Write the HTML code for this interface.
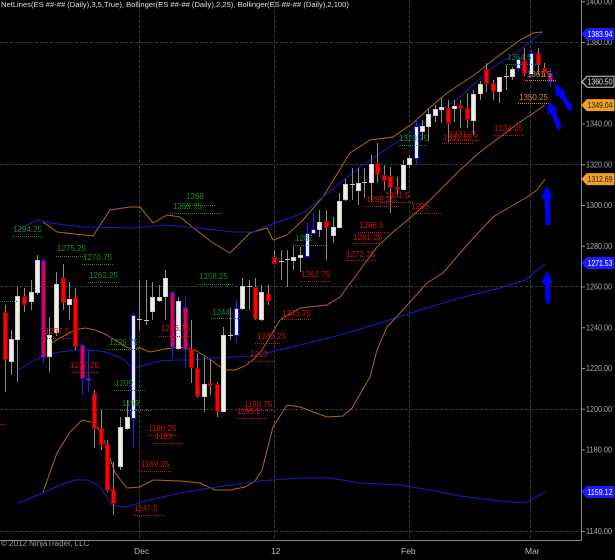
<!DOCTYPE html>
<html><head><meta charset="utf-8">
<style>
html,body{margin:0;padding:0;background:#000;width:615px;height:560px;overflow:hidden}
svg{display:block}
text{font-family:"Liberation Sans",sans-serif}
</style></head>
<body>
<svg id="c" width="615" height="560" xmlns="http://www.w3.org/2000/svg">
<rect width="615" height="560" fill="#000"/>
<g stroke="#3a3a3a" stroke-width="1" stroke-dasharray="3,2">
<line x1="0" y1="42.5" x2="581" y2="42.5"/>
<line x1="0" y1="164.5" x2="581" y2="164.5"/>
<line x1="0" y1="286.5" x2="581" y2="286.5"/>
<line x1="0" y1="409.5" x2="581" y2="409.5"/>
<line x1="0" y1="531.5" x2="581" y2="531.5"/>
<line x1="139.5" y1="0" x2="139.5" y2="540"/>
<line x1="274.5" y1="0" x2="274.5" y2="540"/>
<line x1="409.5" y1="0" x2="409.5" y2="540"/>
<line x1="530.5" y1="0" x2="530.5" y2="540"/>
</g>
<g fill="none" stroke-width="1">
<polyline stroke="#a86a10" points="43,222 57,232 93,236 110,210 130,207 140,207 153,223 167,215 180,217 200,233 213,243 230,253 250,233 267,228 273,240 287,235 303,220 323,197 350,153 370,140 393,137 413,123 427,110 447,93 477,73 493,60 520,40 533,33 543,32"/>
<polyline stroke="#1a1ad0" points="18,230 37,220 50,223 83,227 133,228 167,225 200,228 233,232 253,232 262,228 303,213 360,167 400,140 427,120 460,97 493,67 520,50 543,32"/>
<polyline stroke="#a86a10" points="48,345 60,338 75,330 85,328 95,330 105,334 115,340 128,348 140,348 150,352 165,349 180,347 195,350 205,356 215,363 225,370 235,370 245,366 255,358 262,350 280,320 300,308 327,305 340,297 360,270 377,247 393,232 410,218 427,203 460,170 480,152 500,137 520,122 535,112 545,105"/>
<polyline stroke="#1a1ad0" points="18,370 30,363 45,355 60,352 75,350 90,350 105,352 120,357 133,368 145,365 160,361 175,360 190,360 215,358 250,356 262,354 300,345 340,335 380,323 420,310 460,298 500,288 525,280 545,264"/>
<polyline stroke="#a86a10" points="43,492 57,453 70,432 82,420 95,423 103,437 115,473 127,488 140,487 153,480 180,481 200,483 215,490 230,490 245,487 255,481 262,470 273,427 287,405 300,407 327,417 343,416 352,408 370,377 377,350 387,327 400,313 427,283 443,273 467,245 493,217 510,207 527,197 537,190 545,179"/>
<polyline stroke="#1a1ad0" points="18,503 33,497 43,493 58,486 75,480 88,480 100,487 112,505 125,507 150,500 180,493 210,488 230,485 260,481 300,478 330,478 360,483 400,485 430,490 460,496 500,501 525,503 545,492"/>
</g>
<g id="cd"></g>
<g id="lb" font-size="8"></g>
<g fill="#0000ff" stroke="#0000ff">
<line x1="570" y1="108" x2="560" y2="92" stroke-width="5" stroke-linecap="round"/>
<polygon points="555,84 566,92 556,97" stroke="none"/>
<line x1="559" y1="127" x2="552" y2="110" stroke-width="5" stroke-linecap="round"/>
<polygon points="549,102 558,110 547,114" stroke="none"/>
<line x1="548" y1="223" x2="547" y2="195" stroke-width="5" stroke-linecap="round"/>
<polygon points="547,186 553,198 541,198" stroke="none"/>
<line x1="548" y1="301" x2="547" y2="280" stroke-width="5" stroke-linecap="round"/>
<polygon points="547,271 553,283 541,283" stroke="none"/>
</g>
<line x1="581.5" y1="0" x2="581.5" y2="540" stroke="#888"/>
<line x1="0" y1="540.5" x2="582" y2="540.5" stroke="#888"/>
<g id="ax" font-size="8" fill="#aaa"></g>
<g font-size="8.5" fill="#bbb">
<text x="134" y="554">Dec</text>
<text x="271" y="554">12</text>
<text x="401" y="554">Feb</text>
<text x="525" y="554">Mar</text>
</g>
<text x="1" y="546" font-size="8" fill="#999">© 2012 NinjaTrader, LLC</text>
<text x="1" y="7" font-size="7.6" fill="#ddd">NetLines(ES ##-## (Daily),3,5,True), Bollinger(ES ##-## (Daily),2,25), Bollinger(ES ##-## (Daily),2,100)</text>
<g id="tags" font-size="8"></g>
</svg>
<script>
var NS="http://www.w3.org/2000/svg";
function el(p,n,a,t){var e=document.createElementNS(NS,n);for(var k in a)e.setAttribute(k,a[k]);if(t!=null)e.textContent=t;p.appendChild(e);return e;}
var C=[[5,312,359,305,392,'r'],[11,339,361,330,375,'w'],[17,296,339,287,382,'w'],[24,296,304,288,312,'r'],[31,292,301,280,310,'w'],[37,260,292,255,295,'w'],[43,260,357,258,363,'R'],[49,335,356,317,372,'w'],[56,284,332,272,336,'w'],[63,278,302,264,310,'r'],[69,299,304,282,320,'w'],[75,297,346,288,350,'r'],[82,345,378,343,395,'R'],[88,378,380,350,392,'B'],[94,393,428,390,448,'r'],[101,428,444,410,450,'r'],[107,444,490,440,492,'r'],[113,489,503,462,515,'r'],[120,427,466,417,470,'w'],[127,417,428,400,430,'w'],[133,315,418,313,447,'W'],[139,319,319,280,330,'d'],[146,320,320,280,325,'d'],[152,297,311,282,320,'w'],[159,297,300,285,302,'w'],[165,278,296,270,320,'w'],[172,292,347,290,358,'R'],[178,301,348,297,350,'w'],[185,307,349,297,368,'R'],[191,349,367,320,383,'r'],[197,368,396,353,398,'r'],[204,384,396,357,412,'w'],[210,383,385,360,395,'r'],[217,384,411,382,417,'r'],[223,335,411,327,412,'w'],[230,335,335,308,340,'d'],[236,308,335,300,343,'W'],[242,286,308,278,310,'w'],[249,286,286,280,310,'d'],[255,287,318,278,320,'r'],[261,292,319,285,321,'w'],[268,293,301,285,305,'r'],[274,257,263,250,263,'r'],[281,261,261,250,280,'d'],[287,259,259,250,287,'d'],[293,257,260,247,270,'w'],[300,255,257,247,272,'w'],[307,233,256,222,258,'W'],[313,229,233,213,235,'W'],[319,222,229,210,237,'w'],[326,221,227,210,260,'r'],[333,227,235,217,243,'w'],[339,201,227,193,228,'w'],[345,184,199,179,201,'w'],[352,184,184,168,200,'d'],[358,183,190,168,205,'w'],[364,182,182,168,198,'d'],[371,164,182,155,202,'w'],[377,163,174,143,183,'r'],[384,175,180,165,190,'r'],[390,176,187,167,213,'r'],[397,187,189,177,195,'r'],[403,165,189,160,190,'w'],[409,158,164,155,168,'w'],[416,126,158,119,165,'W'],[422,126,131,120,140,'w'],[428,114,126,109,141,'w'],[435,109,115,105,122,'w'],[441,107,109,97,123,'w'],[448,108,123,100,142,'r'],[454,106,108,100,122,'w'],[460,105,108,100,128,'r'],[467,108,119,93,128,'r'],[473,94,120,90,135,'w'],[480,84,93,81,100,'w'],[486,69,83,63,92,'r'],[493,83,91,80,100,'r'],[499,77,91,77,103,'w'],[506,76,76,65,90,'d'],[512,69,76,67,80,'w'],[518,59,68,57,72,'W'],[524,60,73,48,76,'r'],[531,53,74,50,78,'W'],[538,53,64,48,75,'r'],[544,68,72,63,77,'r'],[550,73,81,68,87,'R']];
var g=document.getElementById('cd');
C.forEach(function(c){var x=c[0],t=c[5];var blue=(t=='R'||t=='W'||t=='B');
el(g,'line',{x1:x+.5,y1:c[3],x2:x+.5,y2:c[4],stroke:blue?'#2020ff':'#8a8a8a','stroke-width':1});
if(t=='d'){el(g,'line',{x1:x-2,y1:c[1]+.5,x2:x+3,y2:c[1]+.5,stroke:'#ccc'});return;}
var h=Math.max(c[2]-c[1],2);var fill=(t=='r'||t=='R'||t=='B')?'#ff0000':'#f2f0e2';
el(g,'rect',{x:x-1.5,y:c[1]+.5,width:4,height:h,fill:fill,stroke:blue?'#1010ff':(fill=='#ff0000'?'#900':'#ccc'),'stroke-width':1});});
var L=[["g",13,232,12,43,236,"1294.25"],["g",57,251,56,85,256,"1275.25"],["g",83,260,82,113,264,"1270.75"],["g",89,278,88,120,282,"1262.25"],["g",0,0,0,17,301,""],["r",45,334,45,75,338,"1237.5"],["g",109,345,108,140,349,"1229.75"],["r",70,368,70,100,372,"1217.25"],["g",115,386,114,145,390,"1209"],["g",122,406,120,152,410,"1199"],["r",148,431,147,178,435,"1186.25"],["r",155,439,152,184,443,"1183"],["r",141,467,140,171,471,"1169.25"],["r",134,511,133,165,515,"1147.5"],["g",173,209,170,222,213,"1269.75"],["g",186,199,180,215,205,"1268"],["g",199,279,198,233,284,"1258.25"],["g",212,315,211,240,318,"1244"],["r",161,331,159,191,336,"1236.75"],["r",257,339,255,280,343,"1232.25"],["r",250,357,248,275,361,"1223"],["r",244,407,243,275,410,"1198.75"],["r",237,414,236,268,418,"1195.5"],["r",0,0,0,5,424,""],["r",366,202,364,397,206,"1299.25"],["r",385,198,380,415,202,"1301.5"],["r",411,209,410,441,213,"1298"],["r",359,228,358,389,232,"1286.5"],["r",353,240,352,383,243,"1281.25"],["r",346,257,345,377,260,"1272.75"],["r",301,277,300,332,281,"1262.75"],["g",295,241,293,326,245,"1282"],["r",282,316,280,312,319,"1243.75"],["g",399,141,398,428,145,"1329.75"],["r",449,137,450,480,140,"1331.75"],["r",443,140,442,473,143,"1330.25"],["r",494,131,493,525,135,"1334.25"],["g",507,60,505,540,64,"1354.5"],["o",527,77,525,557,80,"1361.5"],["o",519,100,518,550,103,"1350.25"]];
var lb=document.getElementById('lb');
L.forEach(function(l){var col=l[0]=='r'?'#d01010':(l[0]=='g'?'#1f8a1f':'#d98a1a');
if(l[6])el(lb,'text',{x:l[1],y:l[2],fill:col},l[6]);
el(lb,'line',{x1:l[3],y1:l[5]+.5,x2:l[4],y2:l[5]+.5,stroke:col,'stroke-dasharray':'1,1'});});
var ax=document.getElementById('ax');
for(var p=1400;p>=1140;p-=20){var y=42+(1380-p)*2.0375;
el(ax,'line',{x1:582,y1:y+.5,x2:585,y2:y+.5,stroke:'#888'});
el(ax,'text',{x:586,y:y+3,textLength:26,lengthAdjust:'spacingAndGlyphs'},p.toFixed(2));}
var T=[[1383.94,'#1a1aff','#fff'],[1360.50,'#111','#ddd'],[1349.04,'#f0a020','#222'],[1312.69,'#f0a020','#222'],[1271.53,'#1a1aff','#fff'],[1159.12,'#1a1aff','#fff']];
var tg=document.getElementById('tags');
T.forEach(function(t){var y=42+(1380-t[0])*2.0375;
el(tg,'polygon',{points:(582)+','+y+' '+587+','+(y-5.5)+' 614,'+(y-5.5)+' 614,'+(y+5.5)+' 587,'+(y+5.5),fill:t[1],stroke:t[1]=='#111'?'#ccc':t[1]});
el(tg,'text',{x:587.5,y:y+3,fill:t[2],textLength:25,lengthAdjust:'spacingAndGlyphs'},t[0].toFixed(2));});
</script>
</body></html>
